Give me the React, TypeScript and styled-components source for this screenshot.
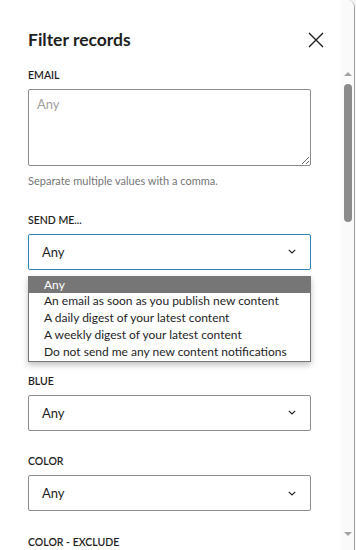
import React from "react"
import styled, { createGlobalStyle } from "styled-components"

const GlobalStyle = createGlobalStyle`
  html, body {
    margin: 0;
    padding: 0;
    background: #f4f4f4;
  }
  body {
    font-family: Lato, "Noto Sans", sans-serif;
    color: #1e1e1e;
  }
  * { box-sizing: border-box; }
`

const Panel = styled.div`
  width: 355px;
  height: 550px;
  display: flex;
  background: #fff;
  border-right: 1px solid #a0a0a0;
  border-top-right-radius: 8px;
  overflow: hidden;
`

const Content = styled.div`
  flex: 1;
  padding: 28px 0 0 28px;
  overflow: hidden;
`

const Header = styled.div`
  display: flex;
  align-items: center;
  justify-content: space-between;
  width: 300px;
  height: 24px;
  margin-bottom: 15px;
`

const Title = styled.h1`
  margin: 0;
  font-size: 17.5px;
  font-weight: 700;
  line-height: 24px;
  color: #1e1e1e;
`

const CloseButton = styled.button`
  width: 24px;
  height: 24px;
  padding: 0;
  border: 0;
  background: none;
  display: flex;
  align-items: center;
  justify-content: center;
  color: #1e1e1e;
`

const Field = styled.div<{ $covered?: boolean }>`
  position: relative;
  width: 283px;
  margin-bottom: 22.6px;
  visibility: ${(p) => (p.$covered ? "hidden" : "visible")};
`

const Label = styled.div`
  font-size: 10.5px;
  font-weight: 600;
  line-height: 16px;
  text-transform: uppercase;
  color: #1e1e1e;
  margin-bottom: 6px;
`

const TextArea = styled.textarea`
  display: block;
  width: 283px;
  height: 77px;
  padding: 6px 8px;
  border: 1px solid #8c8c8c;
  border-radius: 2px;
  font-family: inherit;
  font-size: 13px;
  resize: vertical;
  color: #1e1e1e;
  &::placeholder { color: #a0a0a0; }
`

const Help = styled.div`
  font-size: 11px;
  line-height: 16px;
  color: #757575;
  margin-top: 7px;
  margin-bottom: 2px;
`

const SelectBox = styled.div<{ $focused?: boolean }>`
  display: flex;
  align-items: center;
  justify-content: space-between;
  height: 36px;
  padding: 0 14px 0 13px;
  border: 1px solid ${(p) => (p.$focused ? "#2f86b6" : "#8c8c8c")};
  border-radius: 2px;
  font-size: 13px;
  color: #1e1e1e;
  background: #fff;
`

const Options = styled.ul`
  position: absolute;
  left: 0;
  right: 0;
  top: 64px;
  margin: 0;
  padding: 0;
  list-style: none;
  background: #fff;
  border: 1px solid #767676;
  box-shadow: 0 3px 6px rgba(0, 0, 0, 0.25);
  z-index: 2;
  visibility: visible;
`

const Option = styled.li<{ $active?: boolean }>`
  height: 16.8px;
  line-height: 16.8px;
  padding-left: 15px;
  font-size: 12px;
  white-space: nowrap;
  color: ${(p) => (p.$active ? "#fff" : "#1e1e1e")};
  background: ${(p) => (p.$active ? "#767676" : "transparent")};
`

const Scrollbar = styled.div`
  width: 13px;
  height: 100%;
  padding-top: 72px;
  display: flex;
  flex-direction: column;
  align-items: center;
  background: #fafafa;
`

const Arrow = styled.div<{ $down?: boolean }>`
  width: 0;
  height: 0;
  border-left: 4px solid transparent;
  border-right: 4px solid transparent;
  ${(p) =>
    p.$down
      ? "border-top: 4px solid #a3a3a3; margin-top: auto; margin-bottom: 14px;"
      : "border-bottom: 4px solid #a3a3a3;"}
`

const Thumb = styled.div`
  width: 8px;
  height: 138px;
  margin-top: 8px;
  border-radius: 4px;
  background: #8b8b8b;
`

const Chevron = () => (
  <svg width="8" height="5" viewBox="0 0 8 5">
    <path d="M0.8 0.8 L4 4 L7.2 0.8" fill="none" stroke="#1e1e1e" strokeWidth="1.1" />
  </svg>
)

function Select({ value, focused }: { value: string; focused?: boolean }) {
  return (
    <SelectBox $focused={focused}>
      <span>{value}</span>
      <Chevron />
    </SelectBox>
  )
}

const sendOptions = [
  "Any",
  "An email as soon as you publish new content",
  "A daily digest of your latest content",
  "A weekly digest of your latest content",
  "Do not send me any new content notifications",
]

export default function App() {
  return (
    <>
      <GlobalStyle />
      <Panel>
        <Content>
          <Header>
            <Title>Filter records</Title>
            <CloseButton aria-label="Close">
              <svg width="16" height="16" viewBox="0 0 16 16">
                <path d="M1 1 L15 15 M15 1 L1 15" stroke="#1e1e1e" strokeWidth="1.4" />
              </svg>
            </CloseButton>
          </Header>

          <Field>
            <Label>Email</Label>
            <TextArea placeholder="Any" />
            <Help>Separate multiple values with a comma.</Help>
          </Field>

          <Field>
            <Label>Send me...</Label>
            <Select value="Any" focused />
            <Options>
              {sendOptions.map((o, i) => (
                <Option key={o} $active={i === 0}>
                  {o}
                </Option>
              ))}
            </Options>
          </Field>

          {/* field that sits under the open list */}
          <Field $covered aria-hidden>
            <Label>&nbsp;</Label>
            <SelectBox />
          </Field>

          <Field>
            <Label>Blue</Label>
            <Select value="Any" />
          </Field>

          <Field>
            <Label>Color</Label>
            <Select value="Any" />
          </Field>

          <Field>
            <Label>Color - Exclude</Label>
          </Field>
        </Content>
        <Scrollbar>
          <Arrow />
          <Thumb />
          <Arrow $down />
        </Scrollbar>
      </Panel>
    </>
  )
}
